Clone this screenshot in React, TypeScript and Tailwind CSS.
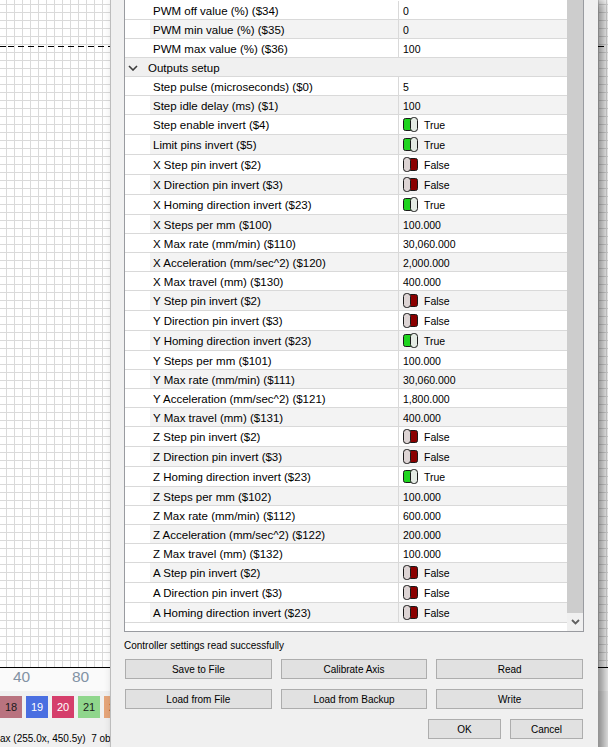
import React from 'react';

type Row = { label: string; value?: string; on?: boolean; header?: boolean };

const rows: Row[] = [
  { label: 'PWM off value (%) ($34)', value: '0' },
  { label: 'PWM min value (%) ($35)', value: '0' },
  { label: 'PWM max value (%) ($36)', value: '100' },
  { label: 'Outputs setup', header: true },
  { label: 'Step pulse (microseconds) ($0)', value: '5' },
  { label: 'Step idle delay (ms) ($1)', value: '100' },
  { label: 'Step enable invert ($4)', on: true },
  { label: 'Limit pins invert ($5)', on: true },
  { label: 'X Step pin invert ($2)', on: false },
  { label: 'X Direction pin invert ($3)', on: false },
  { label: 'X Homing direction invert ($23)', on: true },
  { label: 'X Steps per mm ($100)', value: '100.000' },
  { label: 'X Max rate (mm/min) ($110)', value: '30,060.000' },
  { label: 'X Acceleration (mm/sec^2) ($120)', value: '2,000.000' },
  { label: 'X Max travel (mm) ($130)', value: '400.000' },
  { label: 'Y Step pin invert ($2)', on: false },
  { label: 'Y Direction pin invert ($3)', on: false },
  { label: 'Y Homing direction invert ($23)', on: true },
  { label: 'Y Steps per mm ($101)', value: '100.000' },
  { label: 'Y Max rate (mm/min) ($111)', value: '30,060.000' },
  { label: 'Y Acceleration (mm/sec^2) ($121)', value: '1,800.000' },
  { label: 'Y Max travel (mm) ($131)', value: '400.000' },
  { label: 'Z Step pin invert ($2)', on: false },
  { label: 'Z Direction pin invert ($3)', on: false },
  { label: 'Z Homing direction invert ($23)', on: true },
  { label: 'Z Steps per mm ($102)', value: '100.000' },
  { label: 'Z Max rate (mm/min) ($112)', value: '600.000' },
  { label: 'Z Acceleration (mm/sec^2) ($122)', value: '200.000' },
  { label: 'Z Max travel (mm) ($132)', value: '100.000' },
  { label: 'A Step pin invert ($2)', on: false },
  { label: 'A Direction pin invert ($3)', on: false },
  { label: 'A Homing direction invert ($23)', on: false },
];

const swatches = [
  { n: '18', bg: 'bg-[#b9737f]', fg: 'text-[#1a1a1a]' },
  { n: '19', bg: 'bg-[#4a6fe1]', fg: 'text-white' },
  { n: '20', bg: 'bg-[#d53e6b]', fg: 'text-white' },
  { n: '21', bg: 'bg-[#8fd68c]', fg: 'text-[#1a1a1a]' },
  { n: '22', bg: 'bg-[#e6a67a]', fg: 'text-[#1a1a1a]' },
];

function Toggle({ on }: { on: boolean }) {
  if (on) {
    return (
      <svg width="16" height="17" viewBox="0 0 16 17" className="shrink-0">
        <rect x="1.5" y="2.5" width="9" height="12" rx="2" fill="#1ed41e" stroke="#1a1a1a" />
        <rect x="8.5" y="1.5" width="7" height="14" rx="3" fill="#e4ebe4" stroke="#1a1a1a" />
      </svg>
    );
  }
  return (
    <svg width="16" height="17" viewBox="0 0 16 17" className="shrink-0">
      <rect x="6.5" y="2.5" width="9" height="12" rx="2" fill="#8a0000" stroke="#1a1a1a" />
      <rect x="1.5" y="1.5" width="7" height="14" rx="3" fill="#ddd4d4" stroke="#1a1a1a" />
    </svg>
  );
}

function PropRow({ row, index }: { row: Row; index: number }) {
  const shade = index % 2 === 1 ? 'bg-[#f3f3f3]' : 'bg-white';

  if (row.header) {
    return (
      <div className="flex h-[19px] items-center border-b border-[#d9d9d9] bg-[#f0f0f0]">
        <svg width="10" height="6" viewBox="0 0 10 6" className="ml-[3px] mt-[1px]">
          <path d="M1 1 L5 5 L9 1" fill="none" stroke="#3c3c3c" strokeWidth="1.6" />
        </svg>
        <span className="ml-[10px] pt-[3px] text-[11.5px]">{row.label}</span>
      </div>
    );
  }

  const isBool = row.on !== undefined;
  return (
    <div className={`flex border-b border-[#d9d9d9] ${isBool ? 'h-[20px]' : 'h-[19px]'}`}>
      <div className="w-[25px] bg-white" />
      <div className={`flex w-[249px] items-center border-r border-[#d9d9d9] pl-[3px] pt-[3px] text-[11.5px] ${shade}`}>
        {row.label}
      </div>
      <div className={`flex flex-1 items-center pl-[3px] text-[10.5px] ${shade}`}>
        {isBool ? (
          <>
            <Toggle on={row.on as boolean} />
            <span className="ml-[6px] pt-[3px]">{row.on ? 'True' : 'False'}</span>
          </>
        ) : (
          <span className="pl-[1px] pt-[3px]">{row.value}</span>
        )}
      </div>
    </div>
  );
}

function Btn({ children, className = '' }: { children: React.ReactNode; className?: string }) {
  return (
    <button
      className={`flex h-[20px] items-center justify-center border border-[#adadad] bg-[#e1e1e1] pt-[1px] text-[10px] text-black ${className}`}
    >
      {children}
    </button>
  );
}

export default function App() {
  return (
    <div className="relative h-[747px] w-[608px] overflow-hidden bg-white font-['Liberation_Sans',Arial,sans-serif] text-black">
      {/* canvas behind the dialog */}
      <div className="relative h-[668px] border-b border-black bg-white bg-[linear-gradient(to_right,#dadada_1px,transparent_1px),linear-gradient(to_bottom,#dadada_1px,transparent_1px)] bg-[size:8px_8px] bg-[position:6px_4px]">
        <div className="absolute left-0 right-0 top-[46px] h-[1px] bg-[repeating-linear-gradient(to_right,#000_0px,#000_6px,transparent_6px,transparent_10px)] bg-[position:8px_0]" />
      </div>
      <div className="relative h-[23px] bg-[#fafafa] text-[15.5px] leading-none text-[#8292a4]">
        <span className="absolute left-[13px] top-[1px]">40</span>
        <span className="absolute left-[72px] top-[1px]">80</span>
      </div>
      <div className="h-[56px] bg-[#f0f0f0]">
        <div className="flex gap-[4px] pt-[5px]">
          {swatches.map((s) => (
            <div key={s.n} className={`flex h-[22px] w-[22px] items-center justify-center text-[11px] ${s.bg} ${s.fg}`}>
              {s.n}
            </div>
          ))}
        </div>
        <div className="mt-[13px] whitespace-nowrap text-[10px] leading-[16px]">ax (255.0x, 450.5y)&nbsp;&nbsp;7 obj</div>
      </div>

      {/* settings dialog */}
      <div className="absolute left-[110px] top-0 flex h-[760px] w-[488px] flex-col border-l border-[#bdbdbd] bg-[#f0f0f0] pl-[13px] pr-[14px] shadow-[6px_0_10px_rgba(0,0,0,0.45)]">
        <div className="flex h-[632px] border-x border-b border-[#999ba0] bg-white">
          <div className="flex-1 pt-[1px]">
            {rows.map((r, i) => (
              <PropRow key={r.label + i} row={r} index={i} />
            ))}
          </div>
          <div className="flex w-[16px] flex-col bg-[#f0f0f0]">
            <div className="flex-1 bg-[#cdcdcd]" />
            <div className="flex h-[18px] items-center justify-center">
              <svg width="9" height="6" viewBox="0 0 9 6">
                <path d="M1 1 L4.5 4.5 L8 1" fill="none" stroke="#606060" strokeWidth="1.8" />
              </svg>
            </div>
          </div>
        </div>
        <div className="mt-[6px] h-[16px] text-[10px] leading-[16px]">Controller settings read successfully</div>
        <div className="mx-[1px] mt-[5px] grid grid-cols-3 gap-x-[9px] gap-y-[10px]">
          <Btn>Save to File</Btn>
          <Btn>Calibrate Axis</Btn>
          <Btn>Read</Btn>
          <Btn>Load from File</Btn>
          <Btn>Load from Backup</Btn>
          <Btn>Write</Btn>
        </div>
        <div className="mx-[1px] mt-[10px] flex justify-end gap-[9px]">
          <Btn className="w-[73px]">OK</Btn>
          <Btn className="w-[73px]">Cancel</Btn>
        </div>
      </div>
    </div>
  );
}
